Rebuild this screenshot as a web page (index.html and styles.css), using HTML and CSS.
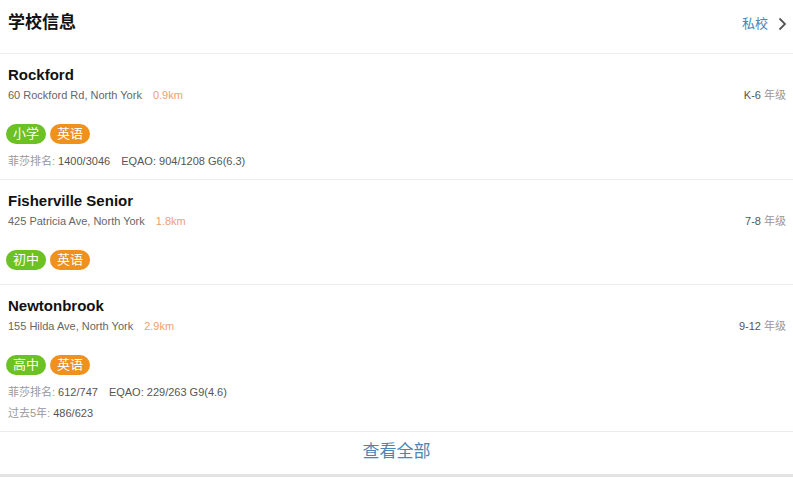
FILE: index.html
```html
<!DOCTYPE html>
<html lang="zh-CN">
<head>
    <meta charset="UTF-8">
    <meta name="viewport" content="width=device-width, initial-scale=1.0">
    <title>学校信息</title>
    <link rel="stylesheet" href="styles.css">
</head>
<body>

<div class="panel">
    <div class="panel-head">
        <h2>学校信息</h2>
        <a class="type-link" href="#">私校
            <svg class="chevron" width="9" height="14" viewBox="0 0 9 14">
                <path d="M1.5 1.5 L7 7 L1.5 12.5" fill="none" stroke="#555" stroke-width="1.8"/>
            </svg>
        </a>
    </div>

    <!-- School list -->
    <div class="school">
        <div class="school-name">Rockford</div>
        <div class="school-addr">
            <span>60 Rockford Rd, North York<span class="dist">0.9km</span></span>
            <span class="grade">K-6 <em>年级</em></span>
        </div>
        <div class="tags">
            <span class="tag green">小学</span>
            <span class="tag orange">英语</span>
        </div>
        <div class="stat"><em>菲莎排名:</em> 1400/3046<span class="gap"></span>EQAO: 904/1208 G6(6.3)</div>
    </div>

    <div class="school">
        <div class="school-name">Fisherville Senior</div>
        <div class="school-addr">
            <span>425 Patricia Ave, North York<span class="dist">1.8km</span></span>
            <span class="grade">7-8 <em>年级</em></span>
        </div>
        <div class="tags">
            <span class="tag green">初中</span>
            <span class="tag orange">英语</span>
        </div>
    </div>

    <div class="school">
        <div class="school-name">Newtonbrook</div>
        <div class="school-addr">
            <span>155 Hilda Ave, North York<span class="dist">2.9km</span></span>
            <span class="grade">9-12 <em>年级</em></span>
        </div>
        <div class="tags">
            <span class="tag green">高中</span>
            <span class="tag orange">英语</span>
        </div>
        <div class="stat"><em>菲莎排名:</em> 612/747<span class="gap"></span>EQAO: 229/263 G9(4.6)</div>
        <div class="stat"><em>过去5年:</em> 486/623</div>
    </div>

    <a class="view-all" href="#">查看全部</a>
</div>

</body>
</html>
```

FILE: styles.css
```css
body {
    margin: 0;
    padding: 0;
    background-color: #fff;
    font-family: "Liberation Sans", Arial, "Noto Sans CJK SC", sans-serif;
    color: #555;
}

.panel {
    border-bottom: 3px solid #e3e3e3;
}

.panel-head {
    display: flex;
    justify-content: space-between;
    align-items: flex-start;
    height: 53px;
    padding: 0 6px 0 8px;
    border-bottom: 1px solid #ececec;
}

.panel-head h2 {
    margin: 13px 0 0;
    font-size: 17px;
    line-height: 20px;
    font-weight: bold;
    color: #111;
}

.type-link {
    display: flex;
    align-items: center;
    margin-top: 16px;
    font-size: 13px;
    line-height: 16px;
    color: #4a85b3;
    text-decoration: none;
}

.chevron {
    margin-left: 10px;
}

.school {
    padding: 11px 7px 7px 8px;
    border-bottom: 1px solid #ececec;
}

.school-name {
    font-size: 15px;
    line-height: 20px;
    font-weight: bold;
    color: #111;
}

.school-addr {
    display: flex;
    justify-content: space-between;
    font-size: 11px;
    line-height: 20px;
    color: #666;
}

.dist {
    margin-left: 11px;
    color: #f0a06e;
}

.grade {
    color: #555;
}

.grade em,
.stat em {
    font-style: normal;
    color: #999;
}

.tags {
    display: flex;
    gap: 4px;
    margin: 19px 0 7px -2px;
}

.tag {
    display: inline-block;
    height: 20px;
    padding: 0 7px;
    border-radius: 10px;
    font-size: 13px;
    line-height: 20px;
    color: #fff;
}

.tag.green {
    background-color: #6cc124;
}

.tag.orange {
    background-color: #f0911e;
}

.stat {
    font-size: 11px;
    line-height: 21px;
    color: #555;
}

.gap {
    display: inline-block;
    width: 11px;
}

.view-all {
    display: block;
    height: 42px;
    line-height: 40px;
    text-align: center;
    font-size: 17px;
    color: #4a85b3;
    text-decoration: none;
}
```
